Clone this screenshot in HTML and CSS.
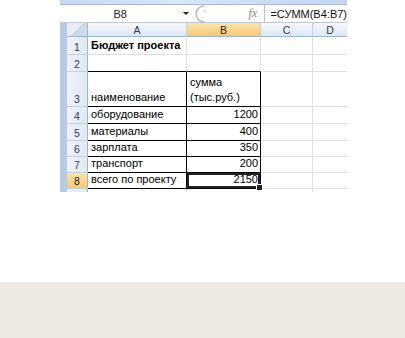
FILE: index.html
```html
<!DOCTYPE html>
<html>
<head>
<meta name="viewport" content="width=device-width, initial-scale=1">
<link rel="stylesheet" href="styles.css">
</head>
<body>

<div class="shot">
	<div class="ribbon"></div>

	<!-- formula bar -->
	<div class="fbar">
		<div class="namebox">B8</div>
		<div class="drop"></div>
		<svg class="knob" width="14" height="18" viewBox="0 0 14 18">
			<path d="M9 1 A8 8 0 0 0 9 17" fill="none" stroke="#b4bcc6" stroke-width="1.5"/>
			<circle cx="10" cy="6" r="2" fill="#e3e8ee"/>
		</svg>
		<div class="fx">fx</div>
		<div class="formula">=СУММ(B4:B7)</div>
	</div>

	<div class="sheet">
		<div class="corner"></div>
		<div class="hd">A</div>
		<div class="hd on">B</div>
		<div class="hd">C</div>
		<div class="hd last">D</div>

		<div class="rh">1</div>
		<div class="c bold">Бюджет проекта</div>
		<div class="c"></div>
		<div class="c"></div>
		<div class="c last"></div>

		<div class="rh">2</div>
		<div class="c edge"></div>
		<div class="c edge"></div>
		<div class="c"></div>
		<div class="c last"></div>

		<div class="rh">3</div>
		<div class="c t">наименование</div>
		<div class="c t">сумма<br>(тыс.руб.)</div>
		<div class="c"></div>
		<div class="c last"></div>

		<div class="rh">4</div>
		<div class="c t">оборудование</div>
		<div class="c t num">1200</div>
		<div class="c"></div>
		<div class="c last"></div>

		<div class="rh">5</div>
		<div class="c t">материалы</div>
		<div class="c t num">400</div>
		<div class="c"></div>
		<div class="c last"></div>

		<div class="rh">6</div>
		<div class="c t">зарплата</div>
		<div class="c t num">350</div>
		<div class="c"></div>
		<div class="c last"></div>

		<div class="rh">7</div>
		<div class="c t">транспорт</div>
		<div class="c t num">200</div>
		<div class="c"></div>
		<div class="c last"></div>

		<div class="rh on">8</div>
		<div class="c t">всего по проекту</div>
		<div class="c t num sel">2150</div>
		<div class="c"></div>
		<div class="c last"></div>

		<div class="rh"></div>
		<div class="c"></div>
		<div class="c"></div>
		<div class="c"></div>
		<div class="c last"></div>
	</div>
</div>

<div class="band"></div>

</body>
</html>
```

FILE: styles.css
```css
* {
  box-sizing: border-box;
}

body {
  margin: 0;
  height: 338px;
  display: flex;
  flex-direction: column;
  background: #fff;
  font-family: "Liberation Sans", Arial, sans-serif;
  font-size: 11px;
  color: #000;
}

/* the pasted excel screenshot */
.shot {
  margin-left: 60px;
  width: 287px;
  height: 192px;
  overflow: hidden;
}

.ribbon {
  height: 5px;
  background: linear-gradient(to right, #c9d9ee, #dbe6f4 40%, #c4d5eb);
  border-bottom: 1px solid #a7bcd8;
}

/* formula bar */
.fbar {
  height: 18px;
  display: flex;
  align-items: center;
  background: #fff;
  border-bottom: 1px solid #c0cad8;
}

.namebox {
  width: 121px;
  text-align: center;
  color: #222;
}

.drop {
  width: 0;
  height: 0;
  margin-left: 2px;
  border-left: 3px solid transparent;
  border-right: 3px solid transparent;
  border-top: 3px solid #222;
}

.knob {
  margin-left: 6px;
}

.fx {
  margin-left: 40px;
  width: 13px;
  font-family: "Liberation Serif", serif;
  font-style: italic;
  font-size: 12px;
  color: #8a8a8a;
}

.formula {
  flex: 1;
  margin-left: 3px;
  padding-left: 5px;
  height: 18px;
  line-height: 18px;
  border-left: 1px solid #b9c3d0;
  color: #111;
}

/* grid */
.sheet {
  display: grid;
  grid-template-columns: 21px 99px 74px 52px 1fr;
  grid-template-rows: 14px 18px 17px 35px 17px 17px 16px 16px 16px 4px;
  border-left: 7px solid #b8cbe2;
}

.corner {
  background: linear-gradient(135deg, #e6edf6 50%, #cdd9e8 50%);
  border-right: 1px solid #9eb6ce;
  border-bottom: 1px solid #9eb6ce;
}

.hd {
  display: flex;
  align-items: center;
  justify-content: center;
  background: linear-gradient(#f5f8fc, #dfe7f1);
  border-right: 1px solid #c3d0e0;
  border-bottom: 1px solid #9eb6ce;
  color: #2f3d52;
  font-size: 10.5px;
}

.rh {
  display: flex;
  align-items: flex-end;
  justify-content: center;
  padding-bottom: 1px;
  background: linear-gradient(to right, #eef3f9, #e0e8f2);
  border-right: 1px solid #9eb6ce;
  border-bottom: 1px solid #c3d0e0;
  color: #2f3d52;
  font-size: 10.5px;
}

.hd.on,
.rh.on {
  background: linear-gradient(#fbe3b0, #f5c970);
  color: #222;
}

.c {
  display: flex;
  flex-direction: column;
  justify-content: flex-end;
  padding: 0 2px 1px 3px;
  border-right: 1px solid #dcdfe4;
  border-bottom: 1px solid #dcdfe4;
  white-space: nowrap;
  line-height: 15px;
}

.last {
  border-right: none;
}

.bold {
  font-weight: bold;
}

/* borders of the data table */
.edge {
  border-bottom-color: #000;
}

.t {
  border-right-color: #000;
  border-bottom-color: #000;
}

.num {
  align-items: flex-end;
}

.sel {
  position: relative;
  box-shadow: inset 0 0 0 2px #222, inset 0 0 0 3px #fff;
}

/* fill handle */
.sel::after {
  content: "";
  position: absolute;
  right: -3px;
  bottom: -3px;
  width: 5px;
  height: 5px;
  background: #222;
  border: 1px solid #fff;
}

.band {
  margin-top: auto;
  height: 56px;
  background: #edeae1;
}
```
